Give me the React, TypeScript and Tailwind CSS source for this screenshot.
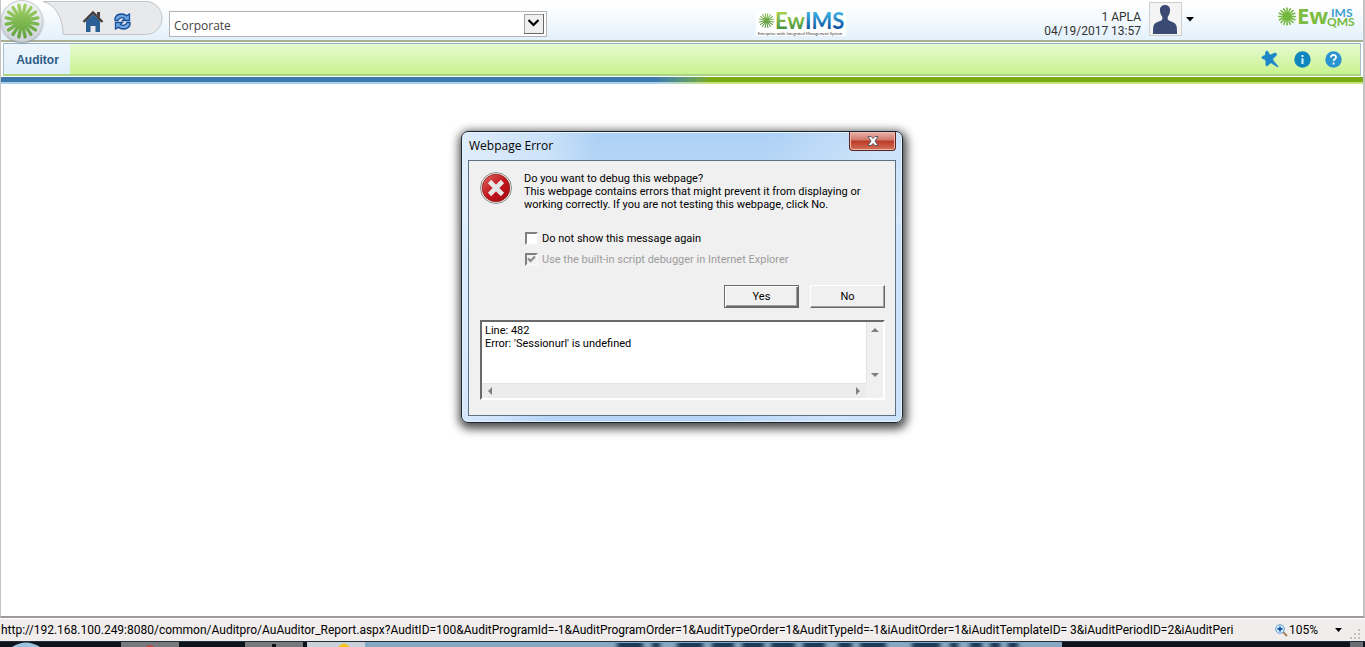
import React from "react";

function Burst({ size, id, top, bottom, stroke }: { size: number; id: string; top: string; bottom: string; stroke: number }) {
  const spokes = Array.from({ length: 16 }, (_, i) => (i * Math.PI) / 8 + Math.PI / 16);
  return (
    <svg width={size} height={size} viewBox="-20 -20 40 40" aria-hidden="true" className="shrink-0">
      <defs>
        <linearGradient id={id} gradientUnits="userSpaceOnUse" x1="0" y1="-18" x2="0" y2="18">
          <stop offset="0" stopColor={top} />
          <stop offset="1" stopColor={bottom} />
        </linearGradient>
      </defs>
      <circle r="7" fill={`url(#${id})`} />
      <g stroke={`url(#${id})`} strokeWidth={stroke} strokeLinecap="round">
        {spokes.map((r) => (
          <line key={r} x1="0" y1="0" x2={Math.cos(r) * 17} y2={Math.sin(r) * 17} />
        ))}
      </g>
    </svg>
  );
}

function HomeIcon() {
  return (
    <svg width="22" height="23" viewBox="0 0 22 23" aria-hidden="true">
      <path d="M15 2h3v6l-3-3z" fill="#4a4040" />
      <path d="M4 11l7-7 7 7v11h-4.500v-6h-5v6H4z" fill="#2a6095" />
      <path d="M1.500 12L11 2.500l9.500 9.500" fill="none" stroke="#453c3c" strokeWidth="2.400" />
    </svg>
  );
}

function RefreshIcon() {
  return (
    <svg width="17" height="17" viewBox="0 0 17 17" aria-hidden="true">
      <path d="M1 7.500V5c1-2.500 3-4 6.500-4 2.500 0 4 .7 5 1.800L15.500 1v6.500H8.500l2-2C8 4 5.500 4.500 4 7.500z" fill="#6ea5de" stroke="#174f9c" strokeWidth="1.300" />
      <path d="M16 9.500V12c-1 2.500-3 4-6.500 4-2.500 0-4-.7-5-1.800L1.500 16V9.500h7l-2 2C9 13 11.500 12.500 13 9.500z" fill="#6ea5de" stroke="#174f9c" strokeWidth="1.300" />
    </svg>
  );
}

function Header() {
  return (
    <header className="flex h-[42px] items-start border-b-2 border-[#a9b093] bg-linear-to-b from-white from-10% to-[#e3f1fb] text-[#333]">
      <a href="#menu" aria-label="Menu" className="z-10 -mb-1 flex size-[42px] shrink-0 items-center justify-center rounded-full border border-[#c8cdd2] bg-linear-to-b from-[#f4f6f7] to-[#cbd2d8] shadow-[0_1px_2px_#8a9399]">
        <Burst size={38} id="burst-main" top="#a3d468" bottom="#5fa03c" stroke={3.5} />
      </a>
      <div className="relative flex h-[35px] w-[120px] items-center gap-2.5 pt-2 pl-[39px]">
        <svg className="absolute inset-0" width="120" height="36" viewBox="0 0 120 36" aria-hidden="true">
          <path d="M0 1.500H103C112 1.500 119 9 119 18S112 34.500 103 34.500H20C20 18 13 5 0 1.500z" fill="#e8e9eb" stroke="#c3c5c8" />
        </svg>
        <a href="#home" aria-label="Home" className="relative"><HomeIcon /></a>
        <a href="#refresh" aria-label="Refresh" className="relative"><RefreshIcon /></a>
      </div>
      <div className="relative mt-[11px] ml-1.5 h-[26px] w-[378px]">
        <select aria-label="Organization" className="h-full w-full appearance-none border border-[#b5b5b5] bg-white px-1 pt-1 font-['Open_Sans',sans-serif] text-[12px] text-[#444]">
          <option>Corporate</option>
        </select>
        <svg className="pointer-events-none absolute top-[3px] right-[3px]" width="20" height="20" viewBox="0 0 20 20" aria-hidden="true">
          <path d="M.5.5h19v19H.5z" fill="#efefef" stroke="#a0a0a0" />
          <path d="M19.500 0v19.500H0" fill="none" stroke="#696969" />
          <path d="M4.500 6l5 5 5-5" fill="none" stroke="#000" strokeWidth="2.200" />
        </svg>
      </div>
      <div className="flex flex-1 justify-center pl-2.5">
        <div className="mt-2.5 h-[26px] w-[90px] bg-white font-['Lato',sans-serif]">
          <div className="flex h-[21px] items-center pl-0.5">
            <Burst size={17} id="burst-ims" top="#8fc35a" bottom="#4f8f3c" stroke={2.4} />
            <svg width="70" height="30" viewBox="0 0 70 30" role="img" aria-label="EwIMS" className="shrink-0">
              <defs>
                <linearGradient id="ims-green" x1="0" y1="0" x2="0" y2="1"><stop offset=".2" stopColor="#a6d24e" /><stop offset=".85" stopColor="#3f8f3c" /></linearGradient>
                <linearGradient id="ims-blue" x1="0" y1="0" x2="0" y2="1"><stop offset=".2" stopColor="#3bb0e2" /><stop offset=".85" stopColor="#0a4b9b" /></linearGradient>
              </defs>
              <text x="0" y="23" fontSize="22" fontWeight="700" fill="url(#ims-green)">Ew</text>
              <text x="30" y="23" fontSize="22" fontWeight="700" fill="url(#ims-blue)">IMS</text>
            </svg>
          </div>
          <p className="pl-0.5 text-[4px] leading-[5px] whitespace-nowrap text-[#333]">Enterprise-wide Integrated Management System</p>
        </div>
      </div>
      <div className="mt-2.5 mr-2 text-right font-['Roboto',sans-serif] text-[12px] leading-[14px]">
        <p>1 APLA</p>
        <p>04/19/2017 13:57</p>
      </div>
      <button aria-label="Account" className="mt-0.5 flex items-center">
        <svg width="33" height="34" viewBox="0 0 33 34" aria-hidden="true">
          <path d="M.5.500h32v33H.5z" fill="#f4f4f4" stroke="#cfcfcf" />
          <path d="M16 3c3.500 0 5.500 2.500 5 6-.2 2.500-1.200 4.500-2.300 5.800v2.700c2 2.300 8 2.500 8.800 6.500.5 2 .5 5 .5 8H4c0-3 0-6 .5-8 .8-4 6.800-4.200 8.800-6.500v-2.700C12.200 13.500 11.200 11.500 11 9c-.5-3.500 1.500-6 5-6z" fill="#3a4a73" />
        </svg>
        <svg width="8" height="5" viewBox="0 0 8 5" className="ml-1" aria-hidden="true"><path d="M0 0h8L4 4.500z" /></svg>
      </button>
      <div className="mr-2 ml-[84px] font-['Open_Sans',sans-serif]">
        <svg width="77" height="36" viewBox="0 -6 77 36" role="img" aria-label="Ew IMS QMS">
          <g stroke="#74b83f" strokeWidth="1.600" strokeLinecap="round">
            <path d="M9 2v17M.8 10.500h16.400M3 4.500l12 12M15 4.500l-12 12M5.800 2.800l6.400 15.400M12.200 2.800L5.800 18.200M1.300 7.200l15.400 6.600M16.700 7.200L1.300 13.800" />
          </g>
          <text x="19" y="18" fontSize="22" fontWeight="700" fill="#7cbd3f">Ew</text>
          <text x="53" y="11" fontSize="12" fontWeight="700" fill="#3f9fd0" fontFamily="Lato">IMS</text>
          <text x="49" y="20" fontSize="12" fontWeight="700" fill="#74b83f" fontFamily="Lato">QMS</text>
        </svg>
      </div>
    </header>
  );
}

function NavBar() {
  return (
    <>
      <nav className="mx-0.5 mt-px flex h-[33px] items-stretch border border-[#a3bfcf] border-t-[#94b9cc] border-b-2 border-b-[#a8d483] bg-linear-to-b from-[#e6fad0] to-[#c9f38f]">
        <a href="#auditor" className="flex w-[66px] items-center justify-center bg-linear-to-b from-[#eef6fc] to-[#e0effb] pt-0.5 pl-px font-['Liberation_Sans',sans-serif] text-[12px] font-bold text-[#2c5a85]">Auditor</a>
        <div className="flex flex-1 items-center justify-end gap-3.5 pr-[18px]">
          <button aria-label="Pin" className="mr-px">
            <svg width="18" height="18" viewBox="0 0 18 18" aria-hidden="true">
              <path d="M5.500 1c1.500 0 2 1 2.200 2.500L9.500 5 14 3c1.800 0 2 2 .5 3l-3 3 1 2 4.500 5.500-.5.500L10.500 13l-1.500 0c-1 1.500-2 2.700-3.500 3-1-1-.5-3-.5-4.800L3.500 9C2 9 1 8.500.7 7.200 2 6 3.500 5.500 4.700 5.200 4.500 3.500 4.500 2 5.500 1z" fill="#1b87c9" stroke="#1b87c9" strokeWidth=".8" />
            </svg>
          </button>
          <button aria-label="Information">
            <svg width="17" height="17" viewBox="0 0 17 17" aria-hidden="true">
              <circle cx="8.500" cy="8.500" r="8.200" fill="#0f86bd" />
              <path d="M7.500 4h2v2h-2zM7.500 7.200h2V13h-2z" fill="#d9f2fc" />
            </svg>
          </button>
          <button aria-label="Help">
            <svg width="17" height="17" viewBox="0 0 17 17" aria-hidden="true">
              <circle cx="8.500" cy="8.500" r="8.200" fill="#2a93d2" />
              <path d="M6 6.500C6 3 11 3.200 11 6.200c0 1.800-2.400 1.800-2.400 3.800M8.600 11.500v2" fill="none" stroke="#fff" strokeWidth="1.800" />
            </svg>
          </button>
        </div>
      </nav>
      <div className="mt-px h-[5px] bg-linear-to-r from-[#3d78ad] from-48% to-[#7aab15] to-52%" />
      <div className="h-0.5 bg-linear-to-r from-[#a9d0ee] from-48% to-[#c4e276] to-52%" />
    </>
  );
}

function ErrorIcon() {
  return (
    <svg width="32" height="32" viewBox="0 0 32 32" aria-hidden="true" className="shrink-0">
      <defs>
        <linearGradient id="err" x1="0" y1="0" x2="1" y2="1"><stop offset="0" stopColor="#e06a66" /><stop offset=".5" stopColor="#c3161c" /><stop offset="1" stopColor="#a00b10" /></linearGradient>
      </defs>
      <circle cx="16" cy="16" r="15.500" fill="#f4f4f4" stroke="#8d8d8d" />
      <circle cx="16" cy="16" r="13.800" fill="url(#err)" stroke="#8f1a1a" strokeWidth=".8" />
      <path d="M9.500 9.500l13 13M22.500 9.500l-13 13" stroke="#e6e6e6" strokeWidth="4.600" />
    </svg>
  );
}

function Arrow({ d }: { d: string }) {
  return <svg width="8" height="8" viewBox="0 0 8 8" aria-hidden="true"><path d={d} fill="#808080" /></svg>;
}

function Dialog() {
  return (
    <section role="dialog" aria-label="Webpage Error" className="flex h-[292px] w-[442px] flex-col rounded-[7px] border border-[#1b2530] bg-[linear-gradient(100deg,rgba(255,255,255,0.6)_0%,rgba(255,255,255,0.35)_18%,rgba(255,255,255,0)_28%,rgba(255,255,255,0)_62%,rgba(255,255,255,0.35)_85%,rgba(255,255,255,0.3)_100%),linear-gradient(to_bottom,#acd0f5_0,#c4def8_91px,#b4d8fb_92px,#b5d4f8_100%)] px-1.5 pb-1.5 font-['Roboto',sans-serif] text-[11px] leading-[13px] text-black shadow-[inset_0_0_0_1px_#e6f2fd,1px_3px_10px_3px_rgba(0,0,0,0.7)]">
      <div className="flex h-7 shrink-0 items-start justify-between">
        <h1 className="mt-1.5 pl-px font-['Open_Sans',sans-serif] text-[12px] leading-4">Webpage Error</h1>
        <button aria-label="Close" className="flex h-[19px] w-[47px] items-center justify-center rounded-b-[4px] border border-t-0 border-[#5a2220] bg-[linear-gradient(to_bottom,#e9b5a9,#d0776a_45%,#b93a25_50%,#d4705a)] shadow-[inset_0_0_0_1px_#eab9ac]">
          <svg width="12" height="10" viewBox="0 0 12 10" aria-hidden="true"><path d="M1 .5h3l2 2 2-2h3L8 5l3 4.500H8l-2-2-2 2H1L4 5z" fill="#fff" stroke="#4b4f5a" strokeWidth=".9" /></svg>
        </button>
      </div>
      <div className="flex flex-1 flex-col border border-[#5d7186] bg-[#f0f0f0] pt-[11px] pr-2.5 pl-[11px]">
        <div className="flex gap-3">
          <ErrorIcon />
          <p className="whitespace-pre">{"Do you want to debug this webpage?\nThis webpage contains errors that might prevent it from displaying or\nworking correctly. If you are not testing this webpage, click No."}</p>
        </div>
        <div className="mt-[21px] ml-[45px] flex flex-col gap-2">
          <label className="flex items-center gap-1"><input type="checkbox" className="size-[13px] appearance-none border-2 border-t-[#808080] border-r-[#f8f8f8] border-b-[#f8f8f8] border-l-[#808080] bg-white" />Do not show this message again</label>
          <label className="relative flex items-center gap-1 text-[#9c9c9c]">
            <input type="checkbox" defaultChecked disabled className="size-[13px] appearance-none border-2 border-t-[#808080] border-r-[#f8f8f8] border-b-[#f8f8f8] border-l-[#808080] bg-[#f0f0f0]" />
            <svg className="pointer-events-none absolute top-0.5 left-0.5" width="9" height="9" viewBox="0 0 9 9" aria-hidden="true"><path d="M1 3.500L3.500 6 8 1.500" fill="none" stroke="#8a8a8a" strokeWidth="2.200" /></svg>
            Use the built-in script debugger in Internet Explorer
          </label>
        </div>
        <div className="mt-[19px] flex justify-end gap-[11px]">
          <button className="h-[23px] w-[75px] border border-[#696969] shadow-[inset_1px_1px_0_#fff,inset_-1px_-1px_0_#696969,inset_-2px_-2px_0_#a0a0a0]">Yes</button>
          <button className="h-[23px] w-[75px] border border-t-white border-r-[#696969] border-b-[#696969] border-l-white shadow-[inset_-1px_-1px_0_#a0a0a0]">No</button>
        </div>
        <div className="mt-3 grid h-20 grid-cols-[1fr_17px] grid-rows-[1fr_15px] border-2 border-t-[#696969] border-r-white border-b-white border-l-[#696969]">
          <textarea readOnly aria-label="Error details" className="resize-none overflow-hidden bg-white px-[3px] pt-0.5" defaultValue={"Line: 482\nError: 'Sessionurl' is undefined"} />
          <div className="flex flex-col items-center justify-between border-l border-[#e3e3e3] py-1">
            <Arrow d="M4 2l4 4H0z" />
            <Arrow d="M4 6l4-4H0z" />
          </div>
          <div className="flex items-center justify-between border-t border-[#e3e3e3] bg-[#ececec] px-1">
            <Arrow d="M2 4l4-4v8z" />
            <Arrow d="M6 4L2 0v8z" />
          </div>
        </div>
      </div>
    </section>
  );
}

function StatusBar() {
  return (
    <footer className="flex h-[23px] items-center border-t border-[#fff] bg-[#f0edec] font-['Roboto',sans-serif] text-[12px] leading-5 text-black">
      <p className="min-w-0 flex-1 overflow-hidden pl-px whitespace-nowrap">http://192.168.100.249:8080/common/Auditpro/AuAuditor_Report.aspx?AuditID=100&amp;AuditProgramId=-1&amp;AuditProgramOrder=1&amp;AuditTypeOrder=1&amp;AuditTypeId=-1&amp;iAuditOrder=1&amp;iAuditTemplateID= 3&amp;iAuditPeriodID=2&amp;iAuditPeri</p>
      <button className="mr-2 ml-3 flex items-center gap-px">
        <svg width="13" height="13" viewBox="0 0 13 13" aria-hidden="true">
          <path d="M8 8l4 4" stroke="#a9825c" strokeWidth="2" />
          <circle cx="5" cy="5" r="4.300" fill="#dcefff" stroke="#5b9bd5" />
          <path d="M5 2.500v5M2.500 5h5" stroke="#1457a8" strokeWidth="1.800" />
        </svg>
        105%
        <svg className="ml-4" width="7" height="4" viewBox="0 0 7 4" aria-hidden="true"><path d="M0 0h7L3.500 4z" /></svg>
      </button>
      <svg className="mt-2 mr-1" width="11" height="11" viewBox="0 0 11 11" aria-hidden="true"><path d="M8 0h2v2H8zM8 4h2v2H8zM8 8h2v2H8zM4 4h2v2H4zM4 8h2v2H4zM0 8h2v2H0z" fill="#c4c0be" /></svg>
    </footer>
  );
}

function Taskbar() {
  return (
    <div className="flex h-1.5 overflow-hidden border-t border-[#26303c] bg-[#0d131b]">
      <svg className="w-full" height="5" viewBox="0 0 1365 5" preserveAspectRatio="none" aria-hidden="true">
        <defs>
          <filter id="soft" x="-5%" y="-100%" width="110%" height="300%"><feGaussianBlur stdDeviation="2 .6" /></filter>
        </defs>
        <path d="M12 5Q26-4 40 5z" fill="#9cc3dd" />
        <path d="M121 0h58v5h-58zM245 0h58v5h-58z" fill="#77797c" />
        <path d="M146 5q4-4 8 0z" fill="#c8433c" />
        <path d="M272 2h4v3h-4z" fill="#111" />
        <path d="M307 0h58v5h-58z" fill="#c9d2da" />
        <path d="M338 5q6-7 12 0z" fill="#f2c71b" />
        <path d="M365 0h697v5H365z" fill="#86a8c2" />
        <path d="M617 1h26v4h-26zM652 1h8v4h-8zM677 1h26v4h-26zM712 1h22v4h-22zM742 1h22v4h-22zM771 1h24v4h-24zM803 1h22v4h-22zM838 1h14v4h-14zM860 1h26v4h-26zM912 1h28v4h-28zM950 1h8v4h-8zM970 1h12v4h-12zM990 1h10v4h-10zM1008 1h10v4h-10z" fill="#1c3a58" filter="url(#soft)" />
        <path d="M1350 0h13v5h-13z" fill="#6b6f74" />
      </svg>
    </div>
  );
}

export default function App() {
  return (
    <div className="flex min-h-screen flex-col bg-white">
      <div className="flex flex-1 flex-col border-r-2 border-b-2 border-l border-[#c4c4c4] border-b-[#9a9a9a]">
        <Header />
        <NavBar />
        <main className="flex flex-1 items-start justify-center pt-[47px] pb-8">
          <Dialog />
        </main>
      </div>
      <StatusBar />
      <Taskbar />
    </div>
  );
}
